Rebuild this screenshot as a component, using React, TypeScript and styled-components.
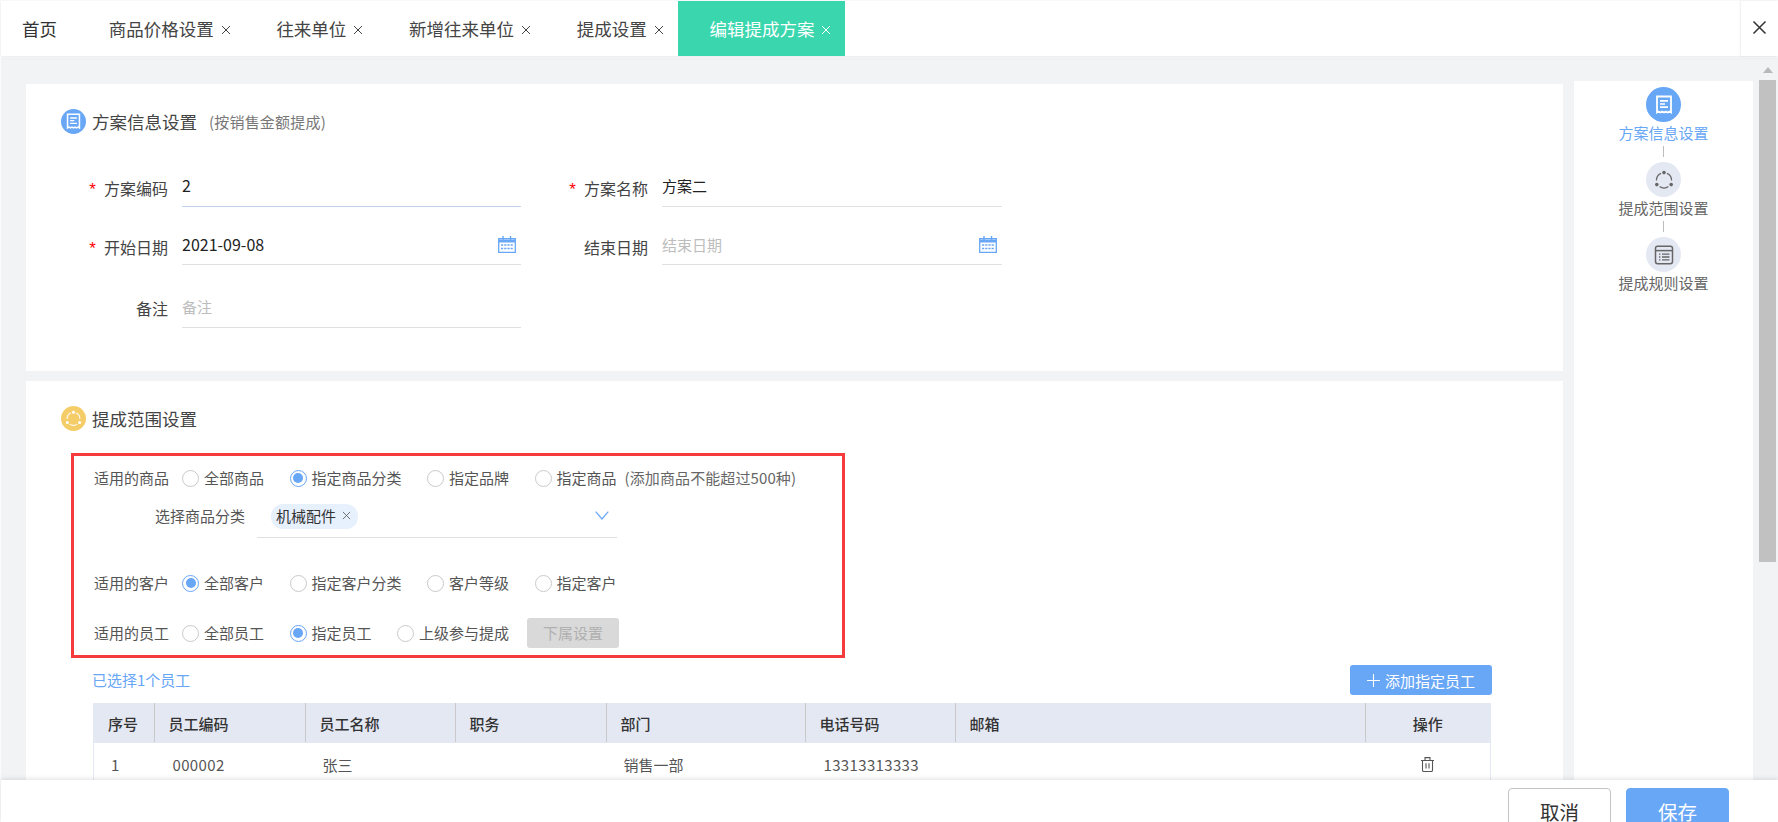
import React from "react"
import styled, { createGlobalStyle } from "styled-components"

const GlobalStyle = createGlobalStyle`
  html, body {
    margin: 0;
    padding: 0;
    height: 100%;
    overflow: hidden;
    background: #fff;
  }
  body {
    font-family: "Noto Sans CJK SC", "Noto Sans", sans-serif;
    color: #333;
  }
  * {
    box-sizing: border-box;
  }
`

const BLUE = "#68a6f6"

const tabs = ["商品价格设置", "往来单位", "新增往来单位", "提成设置"]

const steps = [
  { name: "方案信息设置", icon: "doc" },
  { name: "提成范围设置", icon: "ring" },
  { name: "提成规则设置", icon: "list" },
]

const goodsOptions = [
  { label: "全部商品" },
  { label: "指定商品分类", checked: true },
  { label: "指定品牌" },
  { label: "指定商品" },
]

const customerOptions = [
  { label: "全部客户", checked: true },
  { label: "指定客户分类" },
  { label: "客户等级" },
  { label: "指定客户" },
]

const staffOptions = [
  { label: "全部员工" },
  { label: "指定员工", checked: true },
  { label: "上级参与提成" },
]

const columns = [
  { title: "序号", width: 61 },
  { title: "员工编码", width: 151 },
  { title: "员工名称", width: 150 },
  { title: "职务", width: 151 },
  { title: "部门", width: 199 },
  { title: "电话号码", width: 150 },
  { title: "邮箱", width: 410 },
  { title: "操作", width: 125 },
]

function CrossIcon({ size, color }: { size: number; color: string }) {
  return (
    <svg width={size} height={size} viewBox="0 0 10 10" fill="none">
      <path d="M1 1l8 8M9 1l-8 8" stroke={color} strokeWidth="1" />
    </svg>
  )
}

function DocIcon({ color }: { color: string }) {
  return (
    <svg width="100%" height="100%" viewBox="0 0 20 20" fill="none">
      <path d="M3 1.5h14v16l-1.7-1-1.8 1-1.7-1-1.8 1-1.8-1-1.7 1-1.8-1L3 17.5z" stroke={color} strokeWidth="1.8" />
      <path d="M6 5.8h8M6 9h5M6 12.2h8" stroke={color} strokeWidth="1.7" />
    </svg>
  )
}

function RingIcon({ color }: { color: string }) {
  return (
    <svg width="100%" height="100%" viewBox="0 0 20 20" fill="none">
      <path d="M7 3.4A7.8 7.8 0 0 0 2.4 10.6M17.6 10.6A7.8 7.8 0 0 0 13 3.4M5.6 16.6a7.8 7.8 0 0 0 8.8 0" stroke={color} strokeWidth="1.2" />
      <circle cx="10" cy="2.6" r="1.8" fill={color} />
      <circle cx="2.8" cy="14.6" r="1.8" fill={color} />
      <circle cx="17.2" cy="14.6" r="1.8" fill={color} />
    </svg>
  )
}

function ListIcon({ color }: { color: string }) {
  return (
    <svg width="100%" height="100%" viewBox="0 0 20 20" fill="none">
      <rect x="1.5" y="1.2" width="17" height="17.6" rx="2.2" stroke={color} strokeWidth="1.5" />
      <path d="M2 5.6h16" stroke={color} strokeWidth="1.5" />
      <path d="M5 9.2h1.4M5 12h1.4M5 14.8h1.4M8 9.2h7.5M8 12h7.5M8 14.8h7.5" stroke={color} strokeWidth="1.3" />
    </svg>
  )
}

function CalendarIcon() {
  return (
    <svg width="18" height="17" viewBox="0 0 18 17" fill="none">
      <path d="M.7 2.7h16.6v13.6H.7z" stroke={BLUE} strokeWidth="1.3" />
      <path d="M1 5h16" stroke={BLUE} strokeWidth="3" />
      <path d="M5 0v4M12.5 0v4" stroke={BLUE} strokeWidth="1.4" />
      <path d="M3 9h12M3 12.5h12" stroke={BLUE} strokeWidth="1.6" strokeDasharray="2.2 1" />
    </svg>
  )
}

function TrashIcon() {
  return (
    <TrashSvg width="13" height="15" viewBox="0 0 13 15" fill="none">
      <path d="M0 3.5h13M4 3.3V.6h5v2.7M1.5 3.5v9.8a1.2 1.2 0 0 0 1.2 1.2h7.6a1.2 1.2 0 0 0 1.2-1.2V3.5" stroke="#555" strokeWidth="1.1" />
      <path d="M5 6.2v5.2M8 6.2v5.2" stroke="#555" strokeWidth="1.1" />
    </TrashSvg>
  )
}

function StepGlyph({ icon, color }: { icon: string; color: string }) {
  if (icon === "doc") return <DocIcon color={color} />
  if (icon === "ring") return <RingIcon color={color} />
  return <ListIcon color={color} />
}

function RadioList({ options }: { options: { label: string; checked?: boolean }[] }) {
  return (
    <RadioGroup>
      {options.map((option) => (
        <RadioItem key={option.label}>
          <RadioCircle $checked={option.checked} />
          <RadioText>{option.label}</RadioText>
        </RadioItem>
      ))}
    </RadioGroup>
  )
}

export default function App() {
  return (
    <Page>
      <GlobalStyle />
      <TabBar>
        <HomeTab>首页</HomeTab>
        {tabs.map((tab) => (
          <Tab key={tab}>
            {tab}
            <CrossIcon size={10} color="#444" />
          </Tab>
        ))}
        <Tab $active>
          编辑提成方案
          <CrossIcon size={10} color="#fff" />
        </Tab>
        <CloseAll>
          <CrossIcon size={15} color="#333" />
        </CloseAll>
      </TabBar>

      <Body>
        <MainColumn>
          <Card $height={287}>
            <CardTitle>
              <TitleBadge $color={BLUE}>
                <DocIcon color="#fff" />
              </TitleBadge>
              方案信息设置
              <TitleNote>(按销售金额提成)</TitleNote>
            </CardTitle>

            <FormRow $top={33}>
              <Field>
                <FieldLabel $width={142} $nudge={1}>
                  <Star>*</Star>方案编码
                </FieldLabel>
                <FieldInput $width={339} $focused>
                  <BigValue>2</BigValue>
                </FieldInput>
              </Field>
              <Field>
                <FieldLabel $width={127} $nudge={1}>
                  <Star>*</Star>方案名称
                </FieldLabel>
                <FieldInput $width={340}>方案二</FieldInput>
              </Field>
            </FormRow>

            <FormRow $top={18}>
              <Field>
                <FieldLabel $width={142} $nudge={3}>
                  <Star>*</Star>开始日期
                </FieldLabel>
                <FieldInput $width={339} $lift={1}>
                  <BigValue>2021-09-08</BigValue>
                  <CalendarIcon />
                </FieldInput>
              </Field>
              <Field>
                <FieldLabel $width={127} $nudge={3}>结束日期</FieldLabel>
                <FieldInput $width={340} $lift={1}>
                  <Placeholder>结束日期</Placeholder>
                  <CalendarIcon />
                </FieldInput>
              </Field>
            </FormRow>

            <FormRow $top={23}>
              <Field>
                <FieldLabel $width={142}>备注</FieldLabel>
                <FieldInput $width={339}>
                  <Placeholder>备注</Placeholder>
                </FieldInput>
              </Field>
            </FormRow>
          </Card>

          <Card $height={500}>
            <CardTitle>
              <TitleBadge $color="#f5cd68">
                <RingIcon color="#fff" />
              </TitleBadge>
              提成范围设置
            </CardTitle>

            <ScopeBox>
              <ScopeRow>
                <ScopeLabel>适用的商品</ScopeLabel>
                <RadioList options={goodsOptions} />
                <ScopeNote>(添加商品不能超过500种)</ScopeNote>
              </ScopeRow>

              <SelectRow>
                <SelectLabel>选择商品分类</SelectLabel>
                <SelectBox>
                  <Tag>
                    机械配件
                    <CrossIcon size={9} color="#666" />
                  </Tag>
                  <Chevron width="14" height="9" viewBox="0 0 14 9" fill="none">
                    <path d="M.7.7L7 8l6.3-7.3" stroke={BLUE} strokeWidth="1.2" />
                  </Chevron>
                </SelectBox>
              </SelectRow>

              <ScopeRow $top={30}>
                <ScopeLabel>适用的客户</ScopeLabel>
                <RadioList options={customerOptions} />
              </ScopeRow>

              <ScopeRow $top={20}>
                <ScopeLabel>适用的员工</ScopeLabel>
                <RadioList options={staffOptions} />
                <DisabledButton>下属设置</DisabledButton>
              </ScopeRow>
            </ScopeBox>

            <StaffSection>
              <StaffHead>
                <SelectedCount>已选择1个员工</SelectedCount>
                <AddButton>
                  <svg width="13" height="13" viewBox="0 0 13 13" fill="none">
                    <path d="M6.5 0v13M0 6.5h13" stroke="#fff" strokeWidth="1.1" />
                  </svg>
                  添加指定员工
                </AddButton>
              </StaffHead>
              <StaffTable>
                <thead>
                  <tr>
                    {columns.map((column, i) => (
                      <HeadCell key={column.title} $width={column.width} $center={i === columns.length - 1}>
                        {column.title}
                      </HeadCell>
                    ))}
                  </tr>
                </thead>
                <tbody>
                  <tr>
                    <BodyCell>1</BodyCell>
                    <BodyCell $num>000002</BodyCell>
                    <BodyCell>张三</BodyCell>
                    <BodyCell />
                    <BodyCell>销售一部</BodyCell>
                    <BodyCell $num>13313313333</BodyCell>
                    <BodyCell />
                    <BodyCell $center>
                      <TrashIcon />
                    </BodyCell>
                  </tr>
                </tbody>
              </StaffTable>
            </StaffSection>
          </Card>
        </MainColumn>

        <StepPanel>
          {steps.map((step, i) => (
            <Step key={step.name}>
              {i > 0 && <StepLine />}
              <StepCircle $active={i === 0}>
                <StepIconBox>
                  <StepGlyph icon={step.icon} color={i === 0 ? "#fff" : "#666"} />
                </StepIconBox>
              </StepCircle>
              <StepName $active={i === 0}>{step.name}</StepName>
            </Step>
          ))}
        </StepPanel>

        <ScrollTrack>
          <ScrollArrow />
          <ScrollThumb />
        </ScrollTrack>
      </Body>

      <Footer>
        <CancelButton>取消</CancelButton>
        <SaveButton>保存</SaveButton>
      </Footer>
    </Page>
  )
}

const Page = styled.div`
  display: flex;
  flex-direction: column;
  height: 100vh;
  overflow: hidden;
  padding: 1px 0 0 1px;
  background: #fbfbfc;
`

const TabBar = styled.div`
  display: flex;
  flex: none;
  height: 55px;
  background: #fff;
  box-shadow: 0 1px 3px rgba(0, 0, 0, 0.08);
  position: relative;
  z-index: 2;
`

const HomeTab = styled.div`
  width: 76px;
  padding-left: 21px;
  font-size: 17.5px;
  line-height: 55px;
  color: #333;
`

const Tab = styled.div<{ $active?: boolean }>`
  display: flex;
  align-items: center;
  gap: 7px;
  padding: 0 14px 0 31.7px;
  font-size: 17.5px;
  background: ${(p) => (p.$active ? "#3ad6ae" : "#fff")};
  color: ${(p) => (p.$active ? "#fff" : "#444")};

  svg {
    margin-top: 3px;
  }
`

const CloseAll = styled.div`
  display: flex;
  align-items: center;
  justify-content: center;
  width: 37px;
  margin-left: auto;
  padding-bottom: 3px;
  background: #fff;
  box-shadow: -1px 0 2px rgba(0, 0, 0, 0.07);
`

const Body = styled.div`
  display: flex;
  flex: 1;
  min-height: 0;
  margin-top: 2px;
  background: #f2f3f5;
  overflow: hidden;
`

const MainColumn = styled.div`
  display: flex;
  flex: none;
  flex-direction: column;
  gap: 10px;
  width: 1537px;
  margin: 26px 0 0 25px;
`

const Card = styled.section<{ $height: number }>`
  flex: none;
  height: ${(p) => p.$height}px;
  padding-top: 25px;
  background: #fff;
`

const CardTitle = styled.div`
  display: flex;
  align-items: center;
  height: 25px;
  padding-left: 35px;
  font-size: 17.5px;
  color: #444;
`

const TitleBadge = styled.span<{ $color: string }>`
  display: flex;
  align-items: center;
  justify-content: center;
  width: 25px;
  height: 25px;
  margin-right: 6px;
  padding: 4px;
  border-radius: 50%;
  background: ${(p) => p.$color};
`

const TitleNote = styled.span`
  margin-left: 12px;
  font-size: 15px;
  letter-spacing: 0.2px;
  color: #777;
`

const FormRow = styled.div<{ $top: number }>`
  display: flex;
  margin-top: ${(p) => p.$top}px;
`

const Field = styled.div`
  display: flex;
  align-items: center;
`

const FieldLabel = styled.label<{ $width: number; $nudge?: number }>`
  width: ${(p) => p.$width}px;
  margin-right: 14px;
  padding-top: ${(p) => p.$nudge || 0}px;
  font-size: 16px;
  text-align: right;
  color: #444;
`

const Star = styled.span`
  margin-right: 8px;
  font-family: "Liberation Sans", sans-serif;
  font-size: 17px;
  color: #f00;
`

const FieldInput = styled.div<{ $width: number; $focused?: boolean; $lift?: number }>`
  display: flex;
  align-items: center;
  justify-content: space-between;
  width: ${(p) => p.$width}px;
  height: 40px;
  padding: 0 5px ${(p) => p.$lift ?? 3}px 0;
  font-size: 15px;
  color: #222;
  border-bottom: 1px solid ${(p) => (p.$focused ? "#c3d4e8" : "#dfe0e2")};
`

const BigValue = styled.span`
  font-size: 16px;
`

const Placeholder = styled.span`
  font-size: 15px;
  color: #bdbdbd;
`

const ScopeBox = styled.div`
  width: 774px;
  height: 205px;
  margin: 22px 0 0 45px;
  padding: 7px 0 0 20px;
  border: 3px solid #f53b3b;
`

const ScopeRow = styled.div<{ $top?: number }>`
  display: flex;
  align-items: center;
  height: 30px;
  margin-top: ${(p) => p.$top || 0}px;
  font-size: 15px;
  color: #555;
`

const ScopeLabel = styled.span`
  width: 88px;
  padding-bottom: 2px;
`

const RadioGroup = styled.div`
  display: flex;
  gap: 25.5px;
`

const RadioItem = styled.label`
  display: flex;
  align-items: center;
  gap: 5px;
  font-size: 15px;
  color: #555;
`

const RadioText = styled.span`
  padding-bottom: 2px;
`

const RadioCircle = styled.span<{ $checked?: boolean }>`
  display: flex;
  align-items: center;
  justify-content: center;
  flex: none;
  width: 17px;
  height: 17px;
  border: 1px solid ${(p) => (p.$checked ? BLUE : "#c9c9c9")};
  border-radius: 50%;

  &::after {
    content: "";
    display: ${(p) => (p.$checked ? "block" : "none")};
    width: 10px;
    height: 10px;
    border-radius: 50%;
    background: ${BLUE};
  }
`

const ScopeNote = styled.span`
  margin-left: 8px;
  padding-bottom: 2px;
  font-size: 15px;
  letter-spacing: 0.1px;
  color: #666;
`

const SelectRow = styled.div`
  display: flex;
  align-items: center;
  margin-top: 4px;
`

const SelectLabel = styled.span`
  width: 151px;
  margin-right: 12px;
  padding-bottom: 5px;
  font-size: 15px;
  text-align: right;
  color: #555;
`

const SelectBox = styled.div`
  display: flex;
  align-items: center;
  justify-content: space-between;
  width: 360px;
  height: 41px;
  padding: 0 8px 2px 14px;
  border-bottom: 1px solid #dfe0e2;
`

const Tag = styled.span`
  display: flex;
  align-items: center;
  gap: 6px;
  height: 25px;
  padding: 0 7px 2px 5px;
  border-radius: 12px;
  background: #e7f0fd;
  font-size: 15px;
  color: #333;
`

const Chevron = styled.svg`
  margin-bottom: 2px;
`

const DisabledButton = styled.div`
  display: flex;
  align-items: center;
  justify-content: center;
  width: 92px;
  height: 30px;
  margin-left: 18px;
  padding-bottom: 2px;
  border-radius: 3px;
  background: #d9d9d9;
  font-size: 15px;
  color: #b0b0b0;
`

const StaffSection = styled.div`
  width: 1399px;
  margin: 7px 0 0 67px;
`

const StaffHead = styled.div`
  display: flex;
  align-items: center;
  justify-content: space-between;
  height: 30px;
`

const SelectedCount = styled.span`
  margin-left: -1px;
  padding-bottom: 2px;
  font-size: 15px;
  color: ${BLUE};
`

const AddButton = styled.div`
  display: flex;
  align-items: center;
  gap: 5px;
  width: 142px;
  height: 30px;
  padding-left: 17px;
  border-radius: 3px;
  background: ${BLUE};
  font-size: 15px;
  color: #fff;
`

const StaffTable = styled.table`
  width: 1397px;
  margin-top: 8px;
  border-collapse: collapse;
  table-layout: fixed;
  border-right: 1px solid #e4e8f3;
  border-left: 1px solid #e4e8f3;
`

const HeadCell = styled.th<{ $width: number; $center?: boolean }>`
  position: relative;
  width: ${(p) => p.$width}px;
  height: 40px;
  padding: 0 0 0 ${(p) => (p.$center ? 0 : 14)}px;
  background: #e4e8f3;
  font-size: 15px;
  font-weight: 500;
  text-align: ${(p) => (p.$center ? "center" : "left")};
  color: #333;

  &:not(:last-child)::after {
    content: "";
    position: absolute;
    top: 0;
    right: 0;
    bottom: 1px;
    width: 1px;
    background: #c9c9c9;
  }
`

const BodyCell = styled.td<{ $center?: boolean; $num?: boolean }>`
  height: 42px;
  padding: 0 0 0 ${(p) => (p.$center ? 0 : p.$num ? 18 : 17)}px;
  font-size: 15px;
  letter-spacing: ${(p) => (p.$num ? 0.35 : 0)}px;
  text-align: ${(p) => (p.$center ? "center" : "left")};
  color: #555;
`

const TrashSvg = styled.svg`
  display: block;
  margin: 1px auto 0;
`

const StepPanel = styled.aside`
  flex: none;
  width: 179px;
  margin: 23px 0 0 11px;
  padding-top: 6px;
  background: #fff;
`

const Step = styled.div`
  display: flex;
  flex-direction: column;
  align-items: center;
`

const StepLine = styled.span`
  width: 1px;
  height: 11px;
  margin: 2px 0 5px;
  background: #bdbdbd;
`

const StepCircle = styled.span<{ $active?: boolean }>`
  display: flex;
  align-items: center;
  justify-content: center;
  width: 35px;
  height: 35px;
  border-radius: 50%;
  background: ${(p) => (p.$active ? BLUE : "#e4e8f3")};
`

const StepIconBox = styled.span`
  display: block;
  width: 20px;
  height: 20px;
`

const StepName = styled.span<{ $active?: boolean }>`
  height: 22px;
  font-size: 15px;
  line-height: 22px;
  color: ${(p) => (p.$active ? BLUE : "#666")};
`

const ScrollTrack = styled.div`
  display: flex;
  flex: none;
  flex-direction: column;
  align-items: center;
  width: 17px;
  margin-left: 6px;
  padding-top: 9px;
`

const ScrollArrow = styled.span`
  width: 0;
  height: 0;
  border-right: 5px solid transparent;
  border-bottom: 6px solid #b9b9b9;
  border-left: 5px solid transparent;
`

const ScrollThumb = styled.span`
  width: 17px;
  height: 482px;
  margin-top: 7px;
  background: #c1c1c1;
`

const Footer = styled.footer`
  display: flex;
  flex: none;
  justify-content: flex-end;
  gap: 15px;
  height: 42px;
  padding: 8px 49px 0 0;
  overflow: hidden;
  background: #fff;
  box-shadow: 0 -1px 5px rgba(0, 0, 0, 0.12);
  position: relative;
  z-index: 2;
`

const CancelButton = styled.div`
  display: flex;
  flex: none;
  align-items: center;
  justify-content: center;
  width: 103px;
  height: 46px;
  border: 1px solid #c4c4c4;
  border-radius: 4px;
  font-size: 19.5px;
  color: #333;
`

const SaveButton = styled(CancelButton)`
  border-color: ${BLUE};
  background: ${BLUE};
  color: #fff;
`
